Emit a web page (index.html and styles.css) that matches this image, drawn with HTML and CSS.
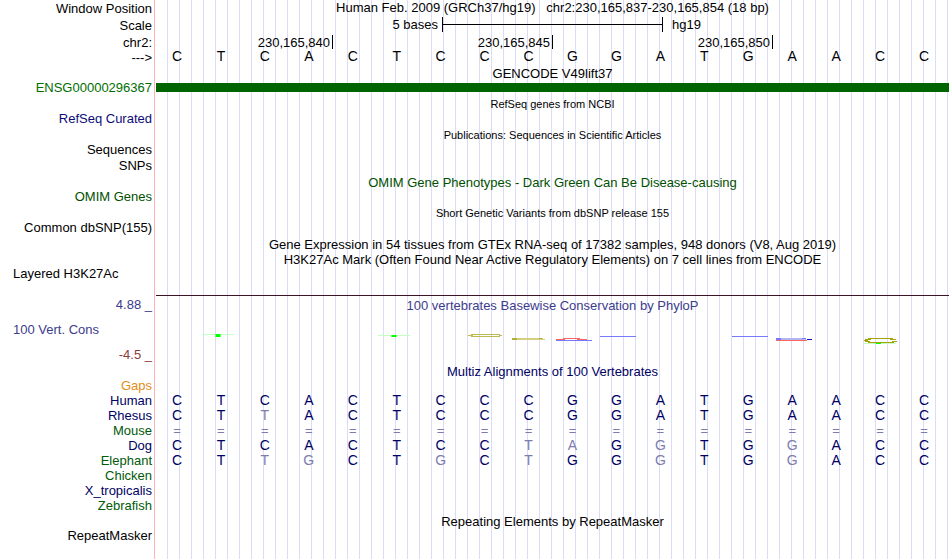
FILE: index.html
```
<!DOCTYPE html>
<html lang="en">
<head>
<meta charset="utf-8">
<title>Human chr2:230,165,837-230,165,854</title>
<link rel="stylesheet" href="styles.css">
</head>
<body>
<main class="browser">
  <div class="row tall"><div class="label">Window Position</div><div class="title raised">Human Feb. 2009 (GRCh37/hg19) &nbsp; chr2:230,165,837-230,165,854 (18 bp)</div></div>
  <div class="row tall"><div class="label">Scale</div><div class="scale"><span class="scale-size">5 bases</span><span class="scale-bar"></span><span class="scale-db">hg19</span></div></div>
  <div class="row"><div class="label">chr2:</div><div class="coords"><span>230,165,840</span><span>230,165,845</span><span>230,165,850</span></div></div>
  <div class="row"><div class="label">---&gt;</div><div class="bases raised" data-seq="CTCACTCCCGGATGAACC"></div></div>
  <div class="row"><div></div><div class="title track">GENCODE V49lift37</div></div>
  <div class="row mid"><div class="label gene">ENSG00000296367</div><div class="gene-bar"></div></div>
  <div class="row"><div></div><div class="title track small">RefSeq genes from NCBI</div></div>
  <div class="row mid"><div class="label refseq">RefSeq Curated</div></div>
  <div class="row"><div></div><div class="title track small">Publications: Sequences in Scientific Articles</div></div>
  <div class="row mid"><div class="label">Sequences</div></div>
  <div class="row mid"><div class="label">SNPs</div></div>
  <div class="row"><div></div><div class="title track omim">OMIM Gene Phenotypes - Dark Green Can Be Disease-causing</div></div>
  <div class="row mid"><div class="label omim">OMIM Genes</div></div>
  <div class="row"><div></div><div class="title track small">Short Genetic Variants from dbSNP release 155</div></div>
  <div class="row tall"><div class="label">Common dbSNP(155)</div></div>
  <div class="row"><div></div><div class="title">Gene Expression in 54 tissues from GTEx RNA-seq of 17382 samples, 948 donors (V8, Aug 2019)</div></div>
  <div class="row"><div></div><div class="title">H3K27Ac Mark (Often Found Near Active Regulatory Elements) on 7 cell lines from ENCODE</div></div>
  <div class="row signal"><div class="label wide raised">Layered H3K27Ac</div></div>
  <div class="row conservation">
    <div class="axis">
      <div class="label cons">4.88 _</div>
      <div class="label wide cons">100 Vert. Cons</div>
      <div class="label low">-4.5 _</div>
    </div>
    <div class="plot">
      <div class="title cons">100 vertebrates Basewise Conservation by PhyloP</div>
      <svg class="logo" viewBox="0 0 793 50" preserveAspectRatio="none" shape-rendering="crispEdges" aria-hidden="true">
        <g fill="#c3ffc3"><path d="M46 21h32v1H46zM222 22h32v1H222zM708 30h32v1H708z"/></g>
        <g fill="#00ff00"><path d="M60 21h4v3H60zM236 22h4v2H236zM720 30h5v1H720z"/></g>
        <g fill="#6bff6b"><path d="M59 21h1v3H59zM64 21h1v3H64zM235 22h1v2H235zM240 22h1v2H240z"/></g>
        <g fill="#bdbb4d"><path d="M315 21h29v1H315zM315 23h29v1H315zM312 22h5v1H312zM343 22h3v1H343z"/></g>
        <g fill="#d2d080"><path d="M356 25h31v1H356zM361 26h28v1H361z"/></g>
        <path fill="#b0ae33" d="M356 25h5v2H356zM383 25h3v1H383z"/>
        <path fill="#ff6464" d="M407 25h17v1H407zM400 26h9v1H400zM421 26h10v1H421zM620 27h31v1H620z"/>
        <path fill="#7878ff" d="M400 27h36v1H400zM444 23h36v1H444zM576 23h36v1H576zM620 25h5v2H620z"/>
        <path fill="#b4b4f0" d="M625 25h25v2H625z"/>
        <path fill="#7878ff" d="M646 25h4v1H646z"/>
        <path fill="#1414cc" d="M651 26h5v1H651z"/>
        <path fill="#a5a30c" d="M712 25h25v1H712zM709 26h6v1H709zM734 26h6v1H734zM708 27h4v1H708zM709 28h5v1H709zM736 28h5v1H736zM712 29h26v1H712z"/>
      </svg>
    </div>
  </div>
  <div class="row"><div></div><div class="title track species">Multiz Alignments of 100 Vertebrates</div></div>
  <div class="row"><div class="label gaps">Gaps</div></div>
  <div class="row species"><div class="label">Human</div><div class="bases" data-seq="CTCACTCCCGGATGAACC"></div></div>
  <div class="row species"><div class="label">Rhesus</div><div class="bases" data-seq="CTtACTCCCGGATGAACC"></div></div>
  <div class="row species"><div class="label alt">Mouse</div><div class="bases gapped" data-seq="=================="></div></div>
  <div class="row species"><div class="label">Dog</div><div class="bases" data-seq="CTCACTCCtaGgTGgACC"></div></div>
  <div class="row species"><div class="label alt">Elephant</div><div class="bases" data-seq="CTtgCTgCtGGgTGgACC"></div></div>
  <div class="row species"><div class="label alt">Chicken</div></div>
  <div class="row species"><div class="label">X_tropicalis</div></div>
  <div class="row species"><div class="label alt">Zebrafish</div></div>
  <div class="row"><div></div><div class="title track">Repeating Elements by RepeatMasker</div></div>
  <div class="row"><div class="label">RepeatMasker</div></div>
</main>
<script src="sequence.js"></script>
</body>
</html>
```
FILE: styles.css
```
* { box-sizing: border-box; }
body {
  margin: 0;
  background: #fff;
  color: #000;
  font: 13px/15px "Liberation Sans", Arial, sans-serif;
}
.browser {
  min-height: 100vh;
  padding: 1px 1px 0 0;
  background:
    linear-gradient(#ffb4b4, #ffb4b4) 154px 0 / 1px 100% no-repeat,
    repeating-linear-gradient(90deg, transparent 0 11px, #dcdcf8 11px 12px) 156px 0 no-repeat;
}
.row {
  display: grid;
  grid-template-columns: 156px minmax(0, 1fr);
  height: 15px;
  white-space: nowrap;
}
.mid { height: 16px; }
.tall { height: 17px; }
.label { padding-right: 4px; text-align: right; }
.wide { padding-left: 13px; text-align: left; }
.title { text-align: center; }
.track { padding-top: 1px; }
.small { font-size: 11px; }
.raised { margin-top: -1px; }

.scale { display: grid; grid-template-columns: 286fr 221fr 286fr; line-height: 14px; }
.scale-size { padding-right: 4px; text-align: right; }
.scale-bar {
  height: 15px;
  margin-top: -1px;
  border: solid #000;
  border-width: 0 1px;
  background: linear-gradient(#000, #000) 0 7px / 100% 1px no-repeat;
}
.scale-db { padding-left: 9px; }
.coords { display: grid; grid-template-columns: 177fr 220fr 220fr 176fr; }
.coords span { height: 14px; padding-right: 2px; border-right: 1px solid #000; text-align: right; }

.bases {
  display: grid;
  grid-template-columns: repeat(18, 1fr);
  margin-left: -1px;
  padding-right: 3px;
  font-size: 14px;
  text-align: center;
}
.gapped { font-size: 13px; }
.mismatch { color: #7c7cae; }

.gene { color: #006e00; }
.gene-bar { height: 9px; margin-top: 3px; background: #006400; }
.refseq { color: #0c0c78; }
.omim { color: #005000; }
.cons { color: #3c3c8c; }
.low { color: #8c3c3c; }
.gaps { color: #e68c14; }
.species { color: #000064; }
.alt { color: #005a0a; }

.signal { height: 28px; }
.conservation { height: 68px; position: relative; }
.conservation::before {
  content: "";
  position: absolute;
  inset: 0 0 auto 156px;
  height: 1px;
  background: #3c1428;
}
.axis { display: flex; flex-direction: column; gap: 10px; padding-top: 2px; }
.plot { padding-top: 3px; }
.logo { display: block; width: 100%; height: 50px; }
```
FILE: sequence.js
```
// Lower-case letters and "=" differ from the human base and are drawn pale.
document.querySelectorAll(".bases").forEach(function (row) {
  Array.from(row.dataset.seq).forEach(function (base) {
    const cell = document.createElement("span");
    cell.textContent = base.toUpperCase();
    if (base === "=" || base !== base.toUpperCase()) cell.className = "mismatch";
    row.append(cell);
  });
});
```
